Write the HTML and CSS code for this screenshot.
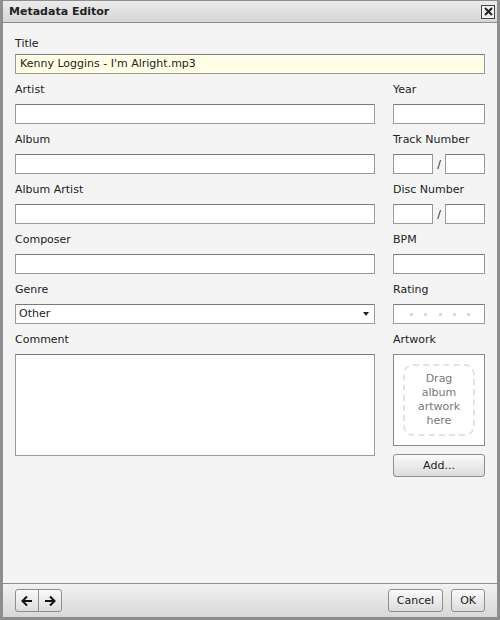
FILE: index.html
```html
<!DOCTYPE html>
<html lang="en">
<head>
  <meta charset="UTF-8">
  <title>Metadata Editor</title>
  <link rel="stylesheet" href="styles.css">
</head>
<body>
  <div class="window">

    <!-- Title bar -->
    <div class="titlebar">
      <span class="title-text">Metadata Editor</span>
      <span class="close-btn">
        <svg width="9" height="9" viewBox="0 0 9 9"><path d="M1 1 L8 8 M8 1 L1 8" stroke="#222" stroke-width="2"/></svg>
      </span>
    </div>

    <!-- Fields -->
    <div class="content">
      <label class="lbl lbl-title">Title</label>
      <div class="field field-focus">Kenny Loggins - I'm Alright.mp3</div>

      <div class="row">
        <div class="main">
          <label class="lbl">Artist</label>
          <div class="field"></div>
        </div>
        <div class="side">
          <label class="lbl">Year</label>
          <div class="field"></div>
        </div>
      </div>

      <div class="row">
        <div class="main">
          <label class="lbl">Album</label>
          <div class="field"></div>
        </div>
        <div class="side">
          <label class="lbl">Track Number</label>
          <div class="pair">
            <div class="field"></div>
            <span class="slash">/</span>
            <div class="field"></div>
          </div>
        </div>
      </div>

      <div class="row">
        <div class="main">
          <label class="lbl">Album Artist</label>
          <div class="field"></div>
        </div>
        <div class="side">
          <label class="lbl">Disc Number</label>
          <div class="pair">
            <div class="field"></div>
            <span class="slash">/</span>
            <div class="field"></div>
          </div>
        </div>
      </div>

      <div class="row">
        <div class="main">
          <label class="lbl">Composer</label>
          <div class="field"></div>
        </div>
        <div class="side">
          <label class="lbl">BPM</label>
          <div class="field"></div>
        </div>
      </div>

      <div class="row">
        <div class="main">
          <label class="lbl">Genre</label>
          <div class="field select">Other<span class="arrow"></span></div>
        </div>
        <div class="side">
          <label class="lbl">Rating</label>
          <div class="field rating">
            <span class="dot"></span><span class="dot"></span><span class="dot"></span><span class="dot"></span><span class="dot"></span>
          </div>
        </div>
      </div>

      <div class="row">
        <div class="main">
          <label class="lbl">Comment</label>
          <div class="field comment"></div>
        </div>
        <div class="side">
          <label class="lbl">Artwork</label>
          <div class="artwork">
            <div class="drop">Drag<br>album<br>artwork<br>here</div>
          </div>
          <div class="btn add-btn">Add...</div>
        </div>
      </div>
    </div>

    <!-- Footer -->
    <div class="footer">
      <div class="nav-group">
        <span class="nav-btn">
          <svg width="12" height="12" viewBox="0 0 12 12"><path d="M11 6 H2 M6 1.5 L1.5 6 L6 10.5" fill="none" stroke="#111" stroke-width="2"/></svg>
        </span>
        <span class="nav-btn">
          <svg width="12" height="12" viewBox="0 0 12 12"><path d="M1 6 H10 M6 1.5 L10.5 6 L6 10.5" fill="none" stroke="#111" stroke-width="2"/></svg>
        </span>
      </div>
      <div class="actions">
        <span class="btn">Cancel</span>
        <span class="btn">OK</span>
      </div>
    </div>

  </div>
</body>
</html>
```

FILE: styles.css
```css
/* Metadata editor dialog */
html, body {
  margin: 0;
  padding: 0;
}
body {
  font-family: "DejaVu Sans", sans-serif;
  font-size: 11px;
  color: #222;
}
.window {
  width: 500px;
  height: 620px;
  box-sizing: border-box;
  border: 3px solid #8e8e8e;
  border-top-width: 1px;
  background: #f4f4f4;
  display: flex;
  flex-direction: column;
}
.titlebar {
  height: 21px;
  border-bottom: 1px solid #8e8e8e;
  background: linear-gradient(#ececec, #d6d6d6);
  display: flex;
  align-items: center;
  justify-content: space-between;
  padding: 0 2px 0 6px;
}
.title-text {
  font-weight: bold;
  font-size: 11px;
  color: #222;
}
.close-btn {
  width: 12px;
  height: 12px;
  border: 1px solid #444;
  background: #f0f0f0;
  display: flex;
  align-items: center;
  justify-content: center;
}
.content {
  flex: 1;
  padding: 14px 12px 0 12px;
}
.lbl {
  display: block;
  line-height: 13px;
  height: 13px;
  margin-bottom: 8px;
}
.lbl-title {
  margin-bottom: 4px;
}
.field {
  height: 20px;
  box-sizing: border-box;
  border: 1px solid #9a9a9a;
  border-top-color: #7a7a7a;
  background: #fff;
  line-height: 18px;
  padding: 0 4px;
  white-space: nowrap;
}
.field-focus {
  background: #ffffe6;
}
.row {
  display: flex;
  gap: 18px;
  margin-top: 9px;
}
.main {
  flex: 1;
}
.side {
  width: 92px;
}
.pair {
  display: flex;
  align-items: center;
}
.pair .field {
  width: 40px;
}
.slash {
  width: 12px;
  text-align: center;
}
.select {
  position: relative;
  padding-left: 3px;
}
.arrow {
  position: absolute;
  right: 5px;
  top: 7px;
  width: 0;
  height: 0;
  border-left: 3px solid transparent;
  border-right: 3px solid transparent;
  border-top: 4px solid #222;
}
.rating {
  display: flex;
  align-items: center;
  justify-content: space-between;
  padding: 0 14px 0 16px;
}
.dot {
  width: 3px;
  height: 3px;
  border-radius: 50%;
  background: #cfcfcf;
}
.comment {
  height: 102px;
}
.artwork {
  height: 92px;
  box-sizing: border-box;
  border: 1px solid #8a8a8a;
  background: #fff;
  padding: 9px;
}
.drop {
  height: 100%;
  box-sizing: border-box;
  border: 2px dashed #e2e2e2;
  border-radius: 10px;
  color: #777;
  text-align: center;
  line-height: 14px;
  padding-top: 6px;
}
.btn {
  display: inline-block;
  box-sizing: border-box;
  height: 23px;
  line-height: 21px;
  padding: 0 8px;
  border: 1px solid #8e8e8e;
  border-radius: 3px;
  background: linear-gradient(#fafafa, #dcdcdc);
  text-align: center;
}
.add-btn {
  display: block;
  margin-top: 8px;
}
.footer {
  height: 33px;
  border-top: 1px solid #8e8e8e;
  background: linear-gradient(#f2f2f2, #d8d8d8);
  display: flex;
  align-items: center;
  justify-content: space-between;
  padding: 0 12px;
}
.nav-group {
  display: flex;
  border: 1px solid #8e8e8e;
  border-radius: 3px;
  background: linear-gradient(#fafafa, #dcdcdc);
}
.nav-btn {
  width: 22px;
  height: 21px;
  display: flex;
  align-items: center;
  justify-content: center;
}
.nav-btn + .nav-btn {
  border-left: 1px solid #8e8e8e;
}
.actions {
  display: flex;
  gap: 8px;
}
```
